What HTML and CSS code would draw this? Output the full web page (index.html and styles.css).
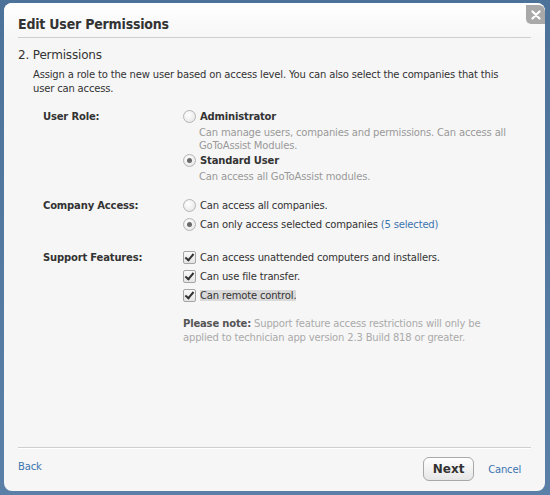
FILE: index.html
```html
<!DOCTYPE html>
<html>
<head>
<meta charset="utf-8">
<title>Edit User Permissions</title>
<link rel="stylesheet" href="styles.css">
</head>
<body>
<div class="dialog">
  <div class="dialog-head">
    <h1 class="dialog-title">Edit User Permissions</h1>
    <span class="close-btn">
      <svg width="10" height="10" viewBox="0 0 10 10"><path d="M1.5 1.5 L8.5 8.5 M8.5 1.5 L1.5 8.5" stroke="#fff" stroke-width="2.2" stroke-linecap="round"/></svg>
    </span>
  </div>
  <div class="dialog-body">
    <h2 class="step-title">2. Permissions</h2>
    <p class="intro">Assign a role to the new user based on access level. You can also select the companies that this user can access.</p>

    <div class="form-grid">
      <div class="field-label">User Role:</div>
      <div class="field">
        <div class="option"><span class="radio"></span><span class="opt-title">Administrator</span></div>
        <div class="opt-desc">Can manage users, companies and permissions. Can access all GoToAssist Modules.</div>
        <div class="option"><span class="radio checked"></span><span class="opt-title">Standard User</span></div>
        <div class="opt-desc">Can access all GoToAssist modules.</div>
      </div>

      <div class="field-label">Company Access:</div>
      <div class="field">
        <div class="option"><span class="radio"></span><span>Can access all companies.</span></div>
        <div class="option"><span class="radio checked"></span><span>Can only access selected companies <a class="link" href="#">(5 selected)</a></span></div>
      </div>

      <div class="field-label">Support Features:</div>
      <div class="field">
        <div class="option"><span class="check"></span><span>Can access unattended computers and installers.</span></div>
        <div class="option"><span class="check"></span><span>Can use file transfer.</span></div>
        <div class="option"><span class="check"></span><span class="focused">Can remote control.</span></div>
        <p class="note"><b>Please note:</b> <span>Support feature access restrictions will only be applied to technician app version 2.3 Build 818 or greater.</span></p>
      </div>
    </div>
  </div>
  <div class="dialog-foot">
    <a class="link back" href="#">Back</a>
    <div class="actions">
      <button class="btn">Next</button>
      <a class="link cancel" href="#">Cancel</a>
    </div>
  </div>
</div>
</body>
</html>
```

FILE: styles.css
```css
html, body {
  margin: 0;
  height: 100%;
}
body {
  background: linear-gradient(#4d7299, #5a80a8);
  font-family: "DejaVu Sans", Verdana, sans-serif;
  font-size: 10px;
  letter-spacing: -0.17px;
  color: #333;
  padding: 3px 5px 4px 4px;
  box-sizing: border-box;
}
.dialog {
  height: 100%;
  background: #f6f6f6;
  border-radius: 8px;
  display: flex;
  flex-direction: column;
  overflow: hidden;
}
.dialog-head {
  background: linear-gradient(#ffffff, #f6f6f6);
  padding: 0 14px;
  position: relative;
}
.dialog-title {
  margin: 0;
  font-family: "DejaVu Sans Condensed", "DejaVu Sans", sans-serif;
  font-size: 14px;
  letter-spacing: -0.2px;
  font-weight: bold;
  color: #333;
  line-height: 20px;
  padding: 11px 0 3px;
  border-bottom: 1px solid #cfcfcf;
}
.close-btn {
  position: absolute;
  top: 2px;
  right: 0;
  width: 19px;
  height: 19px;
  background: #a9a9a9;
  border-radius: 0 6px 0 5px;
  display: flex;
  align-items: center;
  justify-content: center;
}
.dialog-body {
  flex: 1;
  padding: 0 14px;
}
.step-title {
  margin: 9px 0 5px;
  font-size: 12px;
  font-weight: normal;
  color: #333;
  line-height: 16px;
}
.intro {
  margin: 0 0 0 15px;
  line-height: 14px;
  width: 475px;
}
.form-grid {
  display: grid;
  grid-template-columns: 140px 1fr;
  row-gap: 14px;
  margin: 11px 0 0 25px;
}
.field-label {
  font-weight: bold;
  line-height: 19px;
}
.option {
  display: flex;
  align-items: center;
  gap: 4px;
  height: 19px;
}
.opt-title {
  font-weight: bold;
}
.opt-desc {
  color: #999;
  margin: 0 0 -1px 16px;
  line-height: 13px;
  width: 345px;
}
.radio {
  width: 11px;
  height: 11px;
  border-radius: 50%;
  border: 1px solid #b5b5b5;
  background: radial-gradient(circle at 40% 35%, #ffffff, #e2e2e2);
  position: relative;
  flex: none;
}
.radio.checked::after {
  content: "";
  position: absolute;
  left: 3px;
  top: 3px;
  width: 5px;
  height: 5px;
  border-radius: 50%;
  background: #6a6a6a;
}
.check {
  width: 11px;
  height: 11px;
  border: 1px solid #a5a5a5;
  border-radius: 2px;
  background: linear-gradient(#fbfbfb, #e4e4e4);
  position: relative;
  flex: none;
}
.check::after {
  content: "";
  position: absolute;
  left: 3px;
  top: 0;
  width: 3px;
  height: 7px;
  border: solid #333;
  border-width: 0 2px 2px 0;
  transform: rotate(40deg);
}
.focused {
  background: #d9d9d9;
}
.link {
  color: #3b74b0;
  text-decoration: none;
}
.note {
  margin: 12px 0 0;
  color: #aaa;
  line-height: 14px;
  width: 310px;
}
.note b {
  color: #555;
}
.dialog-foot {
  margin: 0 14px;
  border-top: 1px solid #cfcfcf;
  box-shadow: inset 0 1px 0 #fff;
  display: flex;
  justify-content: space-between;
  align-items: flex-start;
  padding: 9px 0 10px;
}
.back {
  line-height: 14px;
  margin-top: 3px;
}
.actions {
  display: flex;
  align-items: flex-start;
  gap: 14px;
}
.cancel {
  line-height: 14px;
  margin-top: 6px;
  margin-right: 10px;
}
.btn {
  font-family: inherit;
  font-size: 12px;
  font-weight: bold;
  color: #333;
  width: 51px;
  height: 24px;
  border: 1px solid #a8a8a8;
  border-radius: 6px;
  background: linear-gradient(#ffffff, #e6e6e6);
  padding: 0;
}
```
